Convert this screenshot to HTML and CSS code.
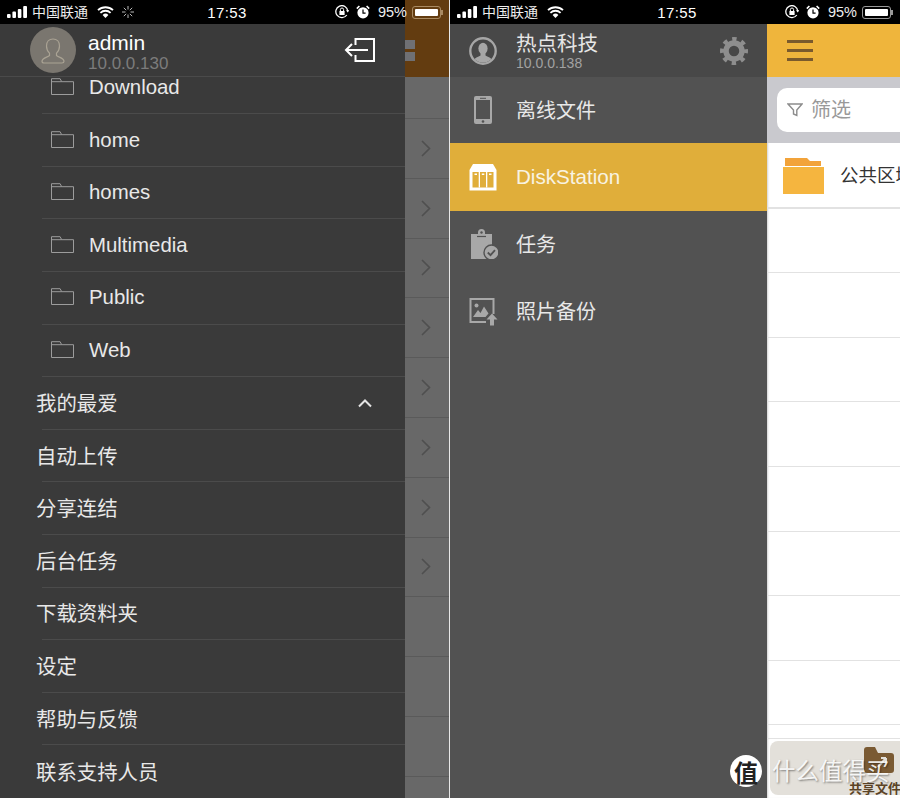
FILE: index.html
```html
<!DOCTYPE html>
<html lang="zh-CN">
<head>
    <meta charset="UTF-8">
    <meta name="viewport" content="width=device-width, initial-scale=1.0">
    <title>DS file</title>
    <link rel="stylesheet" href="styles.css">
</head>
<body>
    <!-- Iconos compartidos -->
    <svg class="icon-defs" aria-hidden="true">
        <symbol id="i-signal" viewBox="0 0 21 12">
            <rect x="0" y="8" width="3.6" height="4" rx="1" fill="#fff"/>
            <rect x="5.4" y="5.5" width="3.6" height="6.5" rx="1" fill="#fff"/>
            <rect x="10.8" y="3" width="3.6" height="9" rx="1" fill="#fff"/>
            <rect x="16.2" y="0" width="3.8" height="12" rx="1" fill="#fff"/>
        </symbol>
        <symbol id="i-wifi" viewBox="0 0 17 12">
            <path d="M1 4.2a11 11 0 0 1 15 0M3.4 6.8a7.4 7.4 0 0 1 10.2 0" fill="none" stroke="#fff" stroke-width="1.8"/>
            <path d="M5.6 9a4.2 4.2 0 0 1 5.8 0L8.5 12z" fill="#fff"/>
        </symbol>
        <symbol id="i-lock" viewBox="0 0 14 14">
            <path d="M11.8 10A6 6 0 1 1 12.8 6" fill="none" stroke="#fff" stroke-width="1.3"/>
            <path d="M11 5.2h3.4l-1.7 2.4z" fill="#fff"/>
            <rect x="4.4" y="6" width="5.2" height="4" fill="#fff"/>
            <path d="M5.4 6V4.6a1.6 1.6 0 0 1 3.2 0V6" fill="none" stroke="#fff"/>
        </symbol>
        <symbol id="i-alarm" viewBox="0 0 14 14">
            <circle cx="7" cy="7.8" r="5.6" fill="#fff"/>
            <path d="M7 4.5v3.6h2.6" fill="none" stroke="#000" stroke-width="1.2"/>
            <path d="M0.8 3.6 3.4 1M13.2 3.6 10.6 1" stroke="#fff" stroke-width="1.6"/>
        </symbol>
        <symbol id="i-folder" viewBox="0 0 23 17">
            <path d="M.5 16.5V.7h8.6l1.6 3h11.8v12.800z" fill="none" stroke="#9c9c9c"/>
            <path d="M.5 3.700h10.200" fill="none" stroke="#9c9c9c"/>
        </symbol>
        <symbol id="i-chevron" viewBox="0 0 10 17">
            <path d="M1 1l7.500 7.500L1 16" fill="none" stroke="#4f4f4f" stroke-width="1.600"/>
        </symbol>
    </svg>

    <div class="screens">
        <!-- Captura izquierda -->
        <section class="phone phone-left">
            <div class="status-bar status-bar-split">
                <div class="status-side">
                    <svg class="ic-signal"><use href="#i-signal"/></svg>
                    <span class="carrier">中国联通</span>
                    <svg class="ic-wifi"><use href="#i-wifi"/></svg>
                    <svg class="ic-spinner" viewBox="0 0 12 12">
                        <path d="M6 0v3.500M6 8.500V12M0 6h3.500M8.500 6H12M1.800 1.800l2.400 2.400M7.800 7.800l2.400 2.400M1.800 10.200l2.400-2.400M7.800 4.200l2.400-2.400" stroke="#b9b9b9" stroke-width="1"/>
                    </svg>
                </div>
                <div class="clock">17:53</div>
                <div class="status-side status-right">
                    <svg class="ic-small"><use href="#i-lock"/></svg>
                    <svg class="ic-small"><use href="#i-alarm"/></svg>
                    <span class="percent">95%</span>
                    <div class="battery battery-tinted"><div class="battery-fill"></div></div>
                </div>
            </div>

            <div class="phone-body">
                <div class="drawer">
                    <div class="drawer-head">
                        <div class="avatar">
                            <svg viewBox="0 0 46 46">
                                <path d="M23 12c-4 0-6.500 3-6.500 7 0 3 1.300 5.500 3 7.200v2.300c-2 1.800-7.500 2.500-7.500 5.800 0 1.200.8 1.700 2 1.700h18c1.200 0 2-.5 2-1.700 0-3.300-5.500-4-7.500-5.800v-2.300c1.700-1.700 3-4.200 3-7.200 0-4-2.500-7-6.500-7z" fill="none" stroke="#aaa394" stroke-width="1.200"/>
                            </svg>
                        </div>
                        <div class="account">
                            <div class="account-name">admin</div>
                            <div class="account-ip">10.0.0.130</div>
                        </div>
                        <svg class="ic-logout" viewBox="0 0 31 24">
                            <path d="M11.500 7V1H30v22H11.500v-6" fill="none" stroke="#fff" stroke-width="2"/>
                            <path d="M24 12H2M8 6l-6 6 6 6" fill="none" stroke="#fff" stroke-width="2"/>
                        </svg>
                    </div>
                    <div class="drawer-scroll">
                        <ul class="menu">
                            <li class="menu-row"><svg class="ic-folder"><use href="#i-folder"/></svg>Download</li>
                            <li class="menu-row"><svg class="ic-folder"><use href="#i-folder"/></svg>home</li>
                            <li class="menu-row"><svg class="ic-folder"><use href="#i-folder"/></svg>homes</li>
                            <li class="menu-row"><svg class="ic-folder"><use href="#i-folder"/></svg>Multimedia</li>
                            <li class="menu-row"><svg class="ic-folder"><use href="#i-folder"/></svg>Public</li>
                            <li class="menu-row"><svg class="ic-folder"><use href="#i-folder"/></svg>Web</li>
                            <li class="menu-row menu-top">
                                我的最爱
                                <svg class="ic-caret" viewBox="0 0 14 9">
                                    <path d="M1 7.500 7 1.500l6 6" fill="none" stroke="#e4e4e4" stroke-width="2"/>
                                </svg>
                            </li>
                            <li class="menu-row menu-top">自动上传</li>
                            <li class="menu-row menu-top">分享连结</li>
                            <li class="menu-row menu-top">后台任务</li>
                            <li class="menu-row menu-top">下载资料夹</li>
                            <li class="menu-row menu-top">设定</li>
                            <li class="menu-row menu-top">帮助与反馈</li>
                            <li class="menu-row menu-top">联系支持人员</li>
                        </ul>
                    </div>
                </div>

                <div class="peek">
                    <div class="peek-head">
                        <span class="peek-block"></span>
                        <span class="peek-block"></span>
                    </div>
                    <div class="peek-search"></div>
                    <div class="peek-row"><svg class="ic-chevron"><use href="#i-chevron"/></svg></div>
                    <div class="peek-row"><svg class="ic-chevron"><use href="#i-chevron"/></svg></div>
                    <div class="peek-row"><svg class="ic-chevron"><use href="#i-chevron"/></svg></div>
                    <div class="peek-row"><svg class="ic-chevron"><use href="#i-chevron"/></svg></div>
                    <div class="peek-row"><svg class="ic-chevron"><use href="#i-chevron"/></svg></div>
                    <div class="peek-row"><svg class="ic-chevron"><use href="#i-chevron"/></svg></div>
                    <div class="peek-row"><svg class="ic-chevron"><use href="#i-chevron"/></svg></div>
                    <div class="peek-row"><svg class="ic-chevron"><use href="#i-chevron"/></svg></div>
                    <div class="peek-row"></div>
                    <div class="peek-row"></div>
                    <div class="peek-row"></div>
                </div>
            </div>
        </section>

        <!-- Captura derecha -->
        <section class="phone phone-right">
            <div class="status-bar">
                <div class="status-side">
                    <svg class="ic-signal"><use href="#i-signal"/></svg>
                    <span class="carrier">中国联通</span>
                    <svg class="ic-wifi"><use href="#i-wifi"/></svg>
                </div>
                <div class="clock">17:55</div>
                <div class="status-side status-right">
                    <svg class="ic-small"><use href="#i-lock"/></svg>
                    <svg class="ic-small"><use href="#i-alarm"/></svg>
                    <span class="percent">95%</span>
                    <div class="battery"><div class="battery-fill"></div></div>
                </div>
            </div>

            <div class="phone-body">
                <div class="side">
                    <div class="side-head">
                        <svg class="ic-user" viewBox="0 0 28 28">
                            <defs>
                                <clipPath id="user-clip"><circle cx="14" cy="14" r="11.500"/></clipPath>
                            </defs>
                            <circle cx="14" cy="14" r="12.700" fill="none" stroke="#a6a6a6" stroke-width="2.400"/>
                            <g clip-path="url(#user-clip)" fill="#a6a6a6">
                                <ellipse cx="14" cy="11.500" rx="4.600" ry="5.800"/>
                                <path d="M11.500 15h5v3.500c2 1.500 6.500 2 7 6v4H4.500v-4c.5-4 5-4.500 7-6z"/>
                            </g>
                        </svg>
                        <div class="account">
                            <div class="side-name">热点科技</div>
                            <div class="side-ip">10.0.0.138</div>
                        </div>
                        <svg class="ic-gear" viewBox="0 0 28 28">
                            <circle cx="14" cy="14" r="8" fill="none" stroke="#8e8e8e" stroke-width="5.500"/>
                            <circle cx="14" cy="14" r="12" fill="none" stroke="#8e8e8e" stroke-width="4" stroke-dasharray="4.400 5.025" stroke-dashoffset="2.200"/>
                        </svg>
                    </div>
                    <div class="side-item">
                        <svg class="ic-side" viewBox="0 0 30 30">
                            <rect x="6" y="1" width="18" height="28" rx="2" fill="#a8a8a8"/>
                            <rect x="8" y="5" width="14" height="19" fill="#525252"/>
                            <rect x="12" y="2.800" width="6" height="1" fill="#525252"/>
                            <circle cx="15" cy="26.500" r="1.300" fill="#525252"/>
                        </svg>
                        离线文件
                    </div>
                    <div class="side-item side-item-active">
                        <svg class="ic-side" viewBox="0 0 30 30">
                            <path d="M5 2h20l3.500 6H1.500z" fill="#fff"/>
                            <path d="M1.500 8h27v20.500h-27z" fill="#fff"/>
                            <rect x="4.500" y="10" width="21" height="15.500" fill="#e0ae3a"/>
                            <rect x="10.700" y="10" width="1.300" height="15.500" fill="#fff"/>
                            <rect x="18" y="10" width="1.300" height="15.500" fill="#fff"/>
                            <rect x="6.500" y="11.500" width="2.500" height="1.500" fill="#fff"/>
                            <rect x="13.800" y="11.500" width="2.500" height="1.500" fill="#fff"/>
                            <rect x="21" y="11.500" width="2.500" height="1.500" fill="#fff"/>
                        </svg>
                        DiskStation
                    </div>
                    <div class="side-item">
                        <svg class="ic-side" viewBox="0 0 30 30">
                            <path d="M3 5h7V3.500a3.500 3.500 0 0 1 7 0V5h7v25H3z" fill="#a8a8a8"/>
                            <path d="M9 7.500h9" stroke="#525252" stroke-width="1.200"/>
                            <circle cx="13.500" cy="3.500" r="1.200" fill="#525252"/>
                            <circle cx="23.500" cy="23.500" r="7.500" fill="#a8a8a8" stroke="#525252" stroke-width="1.400"/>
                            <path d="M19.800 23.500l2.700 2.700 4.500-5" fill="none" stroke="#525252" stroke-width="1.800"/>
                        </svg>
                        任务
                    </div>
                    <div class="side-item">
                        <svg class="ic-side" viewBox="0 0 30 30">
                            <path d="M18 26H2.500V3h23v15" fill="none" stroke="#a8a8a8" stroke-width="2"/>
                            <circle cx="8.500" cy="9.500" r="2" fill="#a8a8a8"/>
                            <path d="M5 21l5-7 2.500 3 3.500-6.500 4.500 7-3 3.500z" fill="#a8a8a8"/>
                            <path d="M24 17.500l5.500 6H26v6h-4v-6h-3.500z" fill="#a8a8a8"/>
                        </svg>
                        照片备份
                    </div>
                </div>

                <div class="files">
                    <div class="files-head">
                        <div class="burger"><span></span><span></span><span></span></div>
                    </div>
                    <div class="files-search">
                        <div class="search-pill">
                            <svg class="ic-filter" viewBox="0 0 16 14">
                                <path d="M1 1h14L9.800 7v5.500L6.500 11V7z" fill="none" stroke="#8c8c8c" stroke-width="1.400"/>
                            </svg>
                            筛选
                        </div>
                    </div>
                    <div class="file-row file-row-first">
                        <svg class="ic-bigfolder" viewBox="0 0 41 36">
                            <path d="M2 0h22l3 3h11v5H2z" fill="#f2a33a"/>
                            <rect x="0" y="9" width="41" height="27" fill="#f5b53f"/>
                        </svg>
                        <span class="file-name">公共区域</span>
                    </div>
                    <div class="file-row"></div>
                    <div class="file-row"></div>
                    <div class="file-row"></div>
                    <div class="file-row"></div>
                    <div class="file-row"></div>
                    <div class="file-row"></div>
                    <div class="file-row"></div>
                    <div class="file-row"></div>
                    <div class="file-row file-row-short"></div>
                    <div class="shared-tile">
                        <svg class="ic-shared" viewBox="0 0 30 26">
                            <path d="M0 3a3 3 0 0 1 3-3h8l3 6h13a3 3 0 0 1 3 3v14a3 3 0 0 1-3 3H3a3 3 0 0 1-3-3z" fill="#7a5a33"/>
                            <path d="M14 20l8-9M22 11h-5M22 11v5" fill="none" stroke="#e3e0da" stroke-width="2"/>
                        </svg>
                        <span class="shared-label">共享文件夹</span>
                    </div>
                </div>
            </div>

            <!-- Marca de agua -->
            <div class="watermark">
                <span class="watermark-seal">值</span>
                <span class="watermark-text">什么值得买</span>
            </div>
        </section>
    </div>
</body>
</html>
```

FILE: styles.css
```css
/* Reset */
* {
    margin: 0;
    padding: 0;
    box-sizing: border-box;
}

:root {
    --cjk: "Liberation Sans", "Noto Sans CJK SC", sans-serif;
    --drawer: #3a3a3a;
    --side: #525252;
    --gold: #e0ae3a;
}

body {
    width: 900px;
    height: 798px;
    overflow: hidden;
    background: #fff;
    font-family: var(--cjk);
}

.icon-defs {
    display: none;
}

.screens {
    display: flex;
    height: 798px;
}

.phone {
    position: relative;
    width: 450px;
    height: 798px;
    display: flex;
    flex-direction: column;
    overflow: hidden;
}

.phone-left {
    border-right: 1px solid #e8e8e8;
}

.phone-body {
    flex: 1;
    display: flex;
    min-height: 0;
}

/* Barra de estado */
.status-bar {
    height: 24px;
    flex: none;
    display: grid;
    grid-template-columns: 1fr auto 1fr;
    align-items: center;
    padding: 0 6px 0 7px;
    background: #000;
    color: #fff;
}

.phone-right .status-bar {
    padding-right: 7px;
}

.status-bar-split {
    background: linear-gradient(90deg, #000 405px, #633c10 405px);
}

.status-side {
    display: flex;
    align-items: center;
    height: 24px;
}

.status-right {
    justify-content: flex-end;
}

.ic-signal {
    width: 21px;
    height: 12px;
    margin-top: -1px;
}

.carrier {
    margin-left: 4px;
    margin-top: -2px;
    font-size: 14px;
    color: #eee;
}

.ic-wifi {
    width: 17px;
    height: 12px;
    margin-left: 9px;
}

.ic-spinner {
    width: 12px;
    height: 12px;
    margin-left: 8px;
}

.clock {
    margin-left: 4px;
    font-size: 15px;
    font-weight: 500;
    letter-spacing: 0.4px;
}

.ic-small {
    width: 14px;
    height: 14px;
    margin-right: 7px;
}

.percent {
    font-size: 14.500px;
    color: #eee;
    margin-left: 1px;
}

.battery {
    position: relative;
    width: 29px;
    height: 13px;
    margin-left: 5px;
    margin-right: 2px;
    padding: 2px;
    border: 1px solid #999;
    border-radius: 3px;
}

.battery::after {
    content: "";
    position: absolute;
    top: 3px;
    right: -3px;
    width: 2px;
    height: 5px;
    background: #999;
}

.battery-tinted {
    border-color: #a98a62;
}

.battery-tinted::after {
    background: #a98a62;
}

.battery-fill {
    width: 100%;
    height: 100%;
    background: #fff;
    border-radius: 1px;
}

/* Menu izquierdo */
.drawer {
    width: 405px;
    flex: none;
    display: flex;
    flex-direction: column;
    background: var(--drawer);
}

.drawer-head {
    height: 53px;
    flex: none;
    display: flex;
    align-items: center;
    padding: 0 30px;
    border-bottom: 1px solid #4a4a4a;
    background: var(--drawer);
}

.avatar {
    width: 46px;
    height: 46px;
    flex: none;
    border-radius: 50%;
    background: #7a766f;
}

.avatar svg {
    display: block;
    width: 46px;
    height: 46px;
}

.account {
    flex: 1;
    min-width: 0;
}

.drawer-head .account {
    margin-left: 12px;
}

.account-name {
    font-size: 21px;
    line-height: 24px;
    margin-top: 3px;
    color: #fff;
}

.account-ip {
    font-size: 17px;
    line-height: 18px;
    color: #7c7c7c;
}

.ic-logout {
    width: 31px;
    height: 24px;
    flex: none;
}

.drawer-scroll {
    flex: 1;
    min-height: 0;
    overflow: hidden;
}

.menu {
    list-style: none;
    margin-top: -15.400px;
}

.menu-row {
    height: 52.600px;
    margin-left: 42px;
    padding-left: 9px;
    display: flex;
    align-items: center;
    font-size: 20.400px;
    color: #e8e8e8;
    border-bottom: 1px solid #4b4b4b;
}

.menu-top {
    padding: 0 0 2px;
    text-indent: -6px;
    justify-content: space-between;
}

.menu-row:last-child {
    border-bottom: none;
}

.ic-folder {
    width: 23px;
    height: 17px;
    margin-right: 15px;
    margin-top: -2px;
}

.ic-caret {
    width: 14px;
    height: 9px;
    margin-top: 4px;
    margin-right: 33px;
}

/* Lista detras del menu */
.peek {
    flex: 1;
    display: flex;
    flex-direction: column;
    background: #686868;
}

.peek-head {
    height: 53px;
    flex: none;
    display: flex;
    flex-direction: column;
    gap: 3px;
    padding-top: 16px;
    background: #633c10;
}

.peek-block {
    width: 10px;
    height: 9px;
    background: #6f7074;
}

.peek-search {
    height: 42px;
    flex: none;
    border-bottom: 1px solid #5a5a5a;
}

.peek-row {
    height: 59.800px;
    flex: none;
    display: flex;
    align-items: center;
    padding-left: 16px;
    border-bottom: 1px solid #5a5a5a;
}

.ic-chevron {
    width: 10px;
    height: 17px;
}

/* Menu derecho */
.side {
    width: 317px;
    flex: none;
    background: var(--side);
}

.side-head {
    height: 53px;
    display: flex;
    align-items: center;
    padding: 0 19px;
    background: #484848;
}

.ic-user {
    width: 28px;
    height: 28px;
    flex: none;
    margin-right: 19px;
}

.side-name {
    font-size: 20.500px;
    line-height: 24px;
    margin-top: 1px;
    color: #e6e6e6;
}

.side-ip {
    font-size: 14px;
    line-height: 15px;
    color: #a2a2a2;
}

.ic-gear {
    width: 28px;
    height: 28px;
    flex: none;
}

.side-item {
    height: 67px;
    display: flex;
    align-items: center;
    padding: 0 0 2px 18px;
    font-size: 20px;
    color: #e8e8e8;
}

.side-item-active {
    height: 68px;
    margin-top: -1px;
    padding-bottom: 0;
    background: var(--gold);
    color: #f8f3e2;
    font-size: 20.600px;
}

.ic-side {
    width: 30px;
    height: 30px;
    flex: none;
    margin-right: 18px;
}

/* Lista de archivos */
.files {
    flex: 1;
    min-width: 0;
    display: flex;
    flex-direction: column;
    overflow: hidden;
    background: #fff;
    box-shadow: inset 2px 0 2px -1px rgba(0, 0, 0, 0.18);
}

.files-head {
    height: 53px;
    flex: none;
    display: flex;
    align-items: center;
    padding-left: 20px;
    background: #efb53c;
}

.burger {
    width: 26px;
    display: flex;
    flex-direction: column;
    gap: 6px;
}

.burger span {
    height: 3px;
    background: #7a5a2c;
}

.files-search {
    height: 66px;
    flex: none;
    padding: 11px 0 11px 10px;
    background: #c9c9ce;
}

.search-pill {
    height: 44px;
    margin-right: -12px;
    display: flex;
    align-items: center;
    padding: 0 0 3px 10px;
    border-radius: 10px;
    background: #fff;
    font-size: 20px;
    color: #999;
}

.ic-filter {
    width: 16px;
    height: 14px;
    margin-right: 8px;
    margin-top: 3px;
}

.file-row {
    height: 64.600px;
    flex: none;
    display: flex;
    align-items: center;
    padding-left: 16px;
    border-bottom: 1px solid #e2e2e2;
    white-space: nowrap;
}

.file-row-first {
    height: 65.600px;
    padding-top: 2px;
    border-bottom-width: 2px;
}

.file-row-short {
    height: 14px;
}

.ic-bigfolder {
    width: 41px;
    height: 36px;
    flex: none;
    margin-right: 16px;
}

.file-name {
    margin-top: -4px;
    font-size: 18.500px;
    color: #333;
}

.shared-tile {
    position: relative;
    height: 54px;
    flex: none;
    margin: 2px -10px 0 3px;
    border-radius: 8px;
    background: #e3e0da;
    white-space: nowrap;
}

.ic-shared {
    position: absolute;
    top: 6px;
    left: 94px;
    width: 30px;
    height: 26px;
}

.shared-label {
    position: absolute;
    top: 40px;
    left: 79px;
    font-size: 13px;
    line-height: 15px;
    font-weight: 700;
    color: #5b4326;
}

/* Marca de agua */
.watermark {
    position: absolute;
    top: 755px;
    left: 280px;
    display: flex;
    align-items: center;
}

.watermark-seal {
    width: 32px;
    height: 32px;
    display: flex;
    align-items: center;
    justify-content: center;
    border-radius: 50%;
    background: #fff;
    color: #222;
    font-size: 24px;
    font-weight: 700;
}

.watermark-text {
    margin-left: 10px;
    margin-top: -3px;
    font-size: 23.500px;
    color: rgba(255, 255, 255, 0.9);
    text-shadow: 1px 1px 2px rgba(0, 0, 0, 0.45);
    white-space: nowrap;
}
```
